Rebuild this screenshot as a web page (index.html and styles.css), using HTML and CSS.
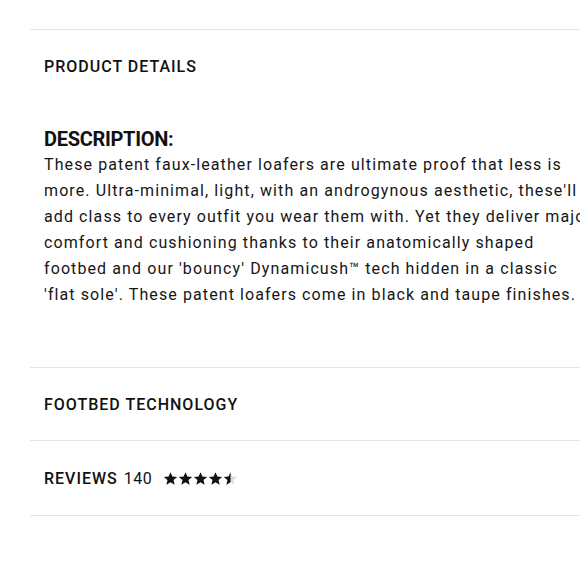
FILE: index.html
```html
<!DOCTYPE html>
<html lang="en">
<head>
<meta charset="utf-8">
<link rel="stylesheet" href="styles.css">
</head>
<body>
<div class="accordion">
  <section class="item">
    <div class="item-head">PRODUCT DETAILS</div>
    <div class="item-body">
      <h3 class="desc-title">DESCRIPTION:</h3>
      <p class="desc-text">These patent faux-leather loafers are ultimate proof that less is<br>more. Ultra-minimal, light, with an androgynous aesthetic, these'll<br>add class to every outfit you wear them with. Yet they deliver major<br>comfort and cushioning thanks to their anatomically shaped<br>footbed and our 'bouncy' Dynamicush™ tech hidden in a classic<br>'flat sole'. These patent loafers come in black and taupe finishes.</p>
    </div>
  </section>
  <section class="item">
    <div class="item-head">FOOTBED TECHNOLOGY</div>
  </section>
  <section class="item item-last">
    <div class="item-head reviews">
      <span>REVIEWS</span><span class="count">140</span>
      <span class="stars" aria-label="4.5 stars">
        <svg viewBox="0 0 24 24" class="star"><path d="M12 1.8l3 7.1 7.7.6-5.9 5 1.8 7.5L12 18l-6.6 4 1.8-7.5-5.9-5 7.7-.6z"/></svg>
        <svg viewBox="0 0 24 24" class="star"><path d="M12 1.8l3 7.1 7.7.6-5.9 5 1.8 7.5L12 18l-6.6 4 1.8-7.5-5.9-5 7.7-.6z"/></svg>
        <svg viewBox="0 0 24 24" class="star"><path d="M12 1.8l3 7.1 7.7.6-5.9 5 1.8 7.5L12 18l-6.6 4 1.8-7.5-5.9-5 7.7-.6z"/></svg>
        <svg viewBox="0 0 24 24" class="star"><path d="M12 1.8l3 7.1 7.7.6-5.9 5 1.8 7.5L12 18l-6.6 4 1.8-7.5-5.9-5 7.7-.6z"/></svg>
        <svg viewBox="0 0 24 24" class="star half"><defs><clipPath id="lh"><rect x="0" y="0" width="12" height="24"/></clipPath></defs><path class="bg" d="M12 1.8l3 7.1 7.7.6-5.9 5 1.8 7.5L12 18l-6.6 4 1.8-7.5-5.9-5 7.7-.6z"/><path clip-path="url(#lh)" d="M12 1.8l3 7.1 7.7.6-5.9 5 1.8 7.5L12 18l-6.6 4 1.8-7.5-5.9-5 7.7-.6z"/></svg>
      </span>
    </div>
  </section>
</div>
</body>
</html>
```

FILE: styles.css
```css
html, body {
  margin: 0;
  padding: 0;
  overflow: hidden;
  background: #fff;
}
body {
  font-family: Roboto, "Liberation Sans", sans-serif;
  color: #111;
}
.accordion {
  margin: 29px 0 0 30px;
  width: 640px;
}
.item {
  border-top: 1px solid #e4e4e4;
}
.item-last {
  border-bottom: 1px solid #e4e4e4;
}
.item-head {
  height: 72px;
  display: flex;
  align-items: center;
  padding-left: 14px;
  font-size: 16px;
  font-weight: 500;
  letter-spacing: 1px;
}
.item-body {
  padding: 24px 0 59px 14px;
}
.desc-title {
  margin: 0;
  font-size: 20px;
  line-height: 26px;
  font-weight: 700;
  letter-spacing: -0.3px;
}
.desc-text {
  margin: 0;
  white-space: nowrap;
  font-size: 16px;
  line-height: 26px;
  letter-spacing: 1.1px;
  color: #161616;
}
.reviews {
  height: 74px;
}
.reviews .count {
  font-weight: 400;
  margin-left: 6px;
  letter-spacing: 0.5px;
}
.stars {
  display: flex;
  margin-left: 11px;
  gap: 0;
}
.star {
  width: 15px;
  height: 15px;
  fill: #111;
}
.star .bg {
  fill: #ddd;
}
```
